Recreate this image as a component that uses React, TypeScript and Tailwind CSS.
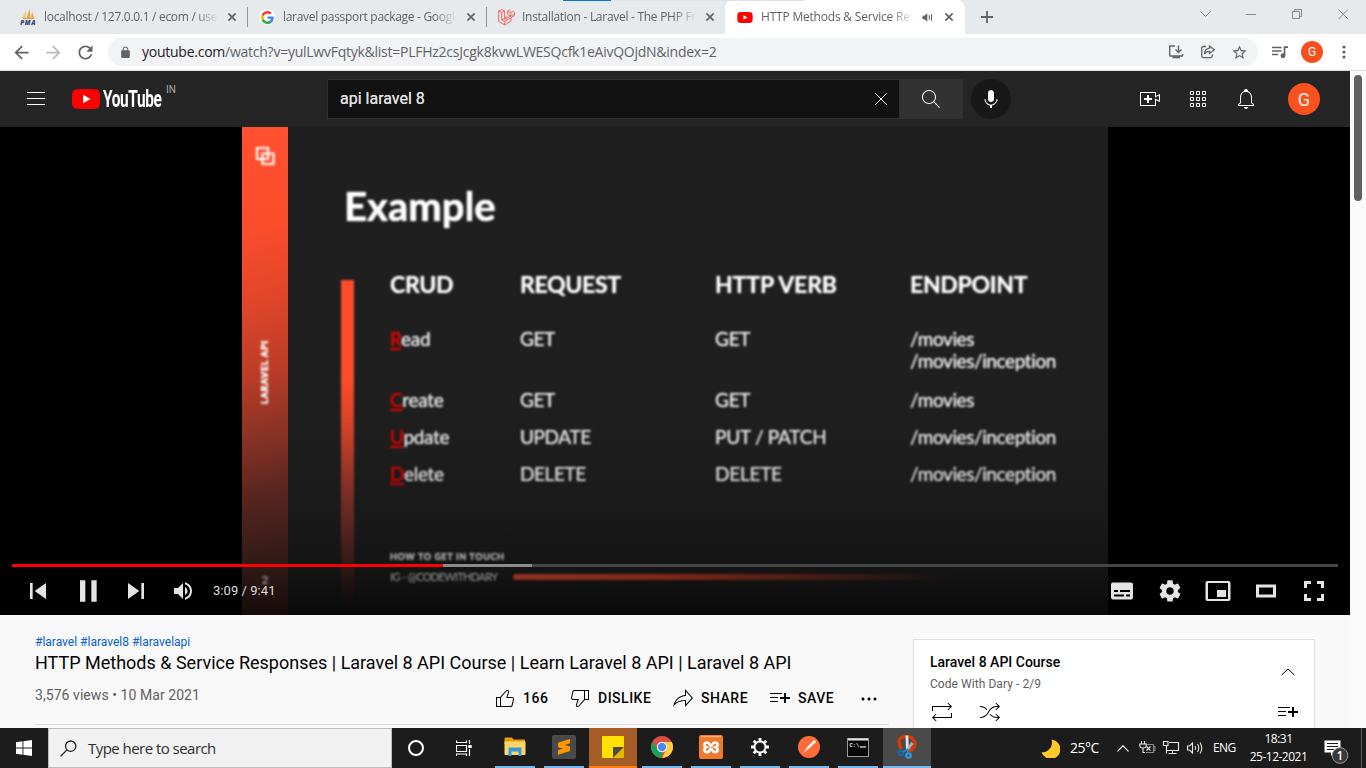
import type { ReactNode } from "react";

const ui = "font-['Open_Sans','Noto_Sans',sans-serif]";

function Icon({ d, size = 24, box = 24, className = "" }: { d: string; size?: number; box?: number; className?: string }) {
  return (
    <svg width={size} height={size} viewBox={`0 0 ${box} ${box}`} fill="currentColor" fillRule="evenodd" className={`block shrink-0 ${className}`}>
      <path d={d} />
    </svg>
  );
}

const P = {
  menu: "M21,6H3V5h18V6z M21,12H3v-1h18V12z M21,18H3v-1h18V18z",
  search:
    "M20.87,20.17l-5.59-5.59C16.35,13.35,17,11.75,17,10c0-3.87-3.13-7-7-7s-7,3.13-7,7s3.13,7,7,7c1.75,0,3.35-0.65,4.58-1.71l5.59,5.59L20.87,20.17z M10,16c-3.31,0-6-2.69-6-6s2.69-6,6-6s6,2.69,6,6S13.31,16,10,16z",
  mic: "M12 3C10.34 3 9 4.37 9 6.07V11.93C9 13.63 10.34 15 12 15C13.66 15 15 13.63 15 11.93V6.07C15 4.37 13.66 3 12 3ZM18.5 12H17.5C17.5 15.03 15.03 17.5 12 17.5C8.97 17.5 6.5 15.03 6.5 12H5.5C5.5 15.24 7.89 17.93 11 18.41V21H13V18.41C16.11 17.93 18.5 15.24 18.5 12Z",
  create: "M14,13h-3v3H9v-3H6v-2h3V8h2v3h3V13z M17,6H3v12h14v-6.39l4,1.83V8.56l-4,1.83V6z M18,5v3.83L22,7v8l-4-1.83V19H2V5H18z",
  bell: "M10,20h4c0,1.1-0.9,2-2,2S10,21.1,10,20z M20,17.35V19H4v-1.65l2-1.88v-5.15c0-2.92,1.56-5.22,4-5.98V3.96c0-1.42,1.49-2.5,2.99-1.76C13.64,2.52,14,3.23,14,3.96l0,0.39c2.44,0.75,4,3.06,4,5.98v5.15L20,17.35z M19,17.77l-2-1.88v-5.47c0-2.47-1.19-4.36-3.13-5.1c-1.26-0.53-2.64-0.5-3.84,0.03C8.15,6.11,7,7.99,7,10.42v5.47l-2,1.88V18h14V17.77z",
  like: "M18.77,11h-4.23l1.52-4.94C16.38,5.03,15.54,4,14.38,4c-0.58,0-1.14,0.24-1.52,0.65L7,11H3v10h4h1h9.43c1.06,0,1.98-0.67,2.19-1.61l1.34-6C21.23,12.15,20.18,11,18.77,11z M7,20H4v-8h3V20z M19.98,13.17l-1.34,6C18.54,19.65,18.03,20,17.43,20H8v-8.61l5.6-6.06C13.79,5.12,14.08,5,14.38,5c0.26,0,0.5,0.11,0.63,0.3c0.07,0.1,0.15,0.26,0.09,0.47l-1.52,4.94L13.18,12h1.35h4.23c0.41,0,0.8,0.17,1.03,0.46C19.92,12.61,20.05,12.86,19.98,13.17z",
  dislike:
    "M17,4h-1H6.57C5.5,4,4.59,4.67,4.38,5.61l-1.34,6C2.77,12.85,3.82,14,5.23,14h4.23l-1.52,4.94C7.62,19.97,8.46,21,9.62,21c0.58,0,1.14-0.24,1.52-0.65L17,14h4V4H17z M10.4,19.67C10.21,19.88,9.92,20,9.62,20c-0.26,0-0.5-0.11-0.63-0.3c-0.07-0.1-0.15-0.26-0.09-0.47l1.52-4.94l0.4-1.29H9.46H5.23c-0.41,0-0.8-0.17-1.03-0.46c-0.12-0.15-0.25-0.4-0.18-0.72l1.34-6C5.46,5.35,5.97,5,6.57,5H16v8.61L10.4,19.67z M20,13h-3V5h3V13z",
  share: "M15,5.63L20.66,12L15,18.37V15v-1h-1c-3.96,0-7.14,1-9.75,3.09c1.84-4.07,5.11-6.4,9.89-7.1L15,9.86V9V5.63z M14,3v6C6.22,10.13,3.11,15.33,2,21c2.78-3.97,6.44-6,12-6v6l8-9L14,3z",
  save: "M22,13h-4v4h-2v-4h-4v-2h4V7h2v4h4V13z M14,7H2v1h12V7z M2,12h8v-1H2V12z M2,16h8v-1H2V16z",
  dots: "M7.5,12c0,0.83-0.67,1.5-1.5,1.5S4.5,12.83,4.5,12s0.67-1.5,1.5-1.5S7.5,11.17,7.5,12z M12,10.5c-0.83,0-1.5,0.67-1.5,1.5s0.67,1.5,1.5,1.5s1.5-0.67,1.5-1.5S12.83,10.5,12,10.5z M18,10.5c-0.83,0-1.5,0.67-1.5,1.5s0.67,1.5,1.5,1.5s1.5-0.67,1.5-1.5S18.83,10.5,18,10.5z",
  loop: "M21,13h1v5L3.93,18.03l2.62,2.62l-0.71,0.71L1.99,17.5l3.85-3.85l0.71,0.71l-2.67,2.67L21,17V13z M3,7l17.12-0.03l-2.67,2.67l0.71,0.71l3.85-3.85l-3.85-3.85l-0.71,0.71l2.62,2.62L2,6v5h1V7z",
  shuffle:
    "M18.15,13.65L22,17.5l-3.85,3.85l-0.71-0.71L20.09,18H19c-2.84,0-5.53-1.23-7.39-3.38l0.76-0.65C14.03,15.89,16.45,17,19,17h1.09l-2.65-2.65L18.15,13.65z M19,7h1.09l-2.65,2.65l0.71,0.71L22,6.5l-3.85-3.85l-0.71,0.71L20.09,6H19c-3.58,0-6.86,1.95-8.57,5.09l-0.73,1.34C8.16,15.25,5.21,17,2,17v1c3.58,0,6.86-1.95,8.57-5.09l0.73-1.34C12.84,8.75,15.79,7,19,7z M8.59,9.98l0.75-0.66C7.49,7.21,4.81,6,2,6v1C4.52,7,6.92,8.09,8.59,9.98z",
  gear: "m 23.94,18.78 c .03,-0.25 .05,-0.51 .05,-0.78 0,-0.27 -0.02,-0.52 -0.05,-0.78 l 1.68,-1.32 c .15,-0.12 .19,-0.33 .09,-0.51 l -1.6,-2.76 c -0.09,-0.17 -0.31,-0.24 -0.48,-0.17 l -1.99,.8 c -0.41,-0.32 -0.86,-0.58 -1.35,-0.78 l -0.30,-2.12 c -0.02,-0.19 -0.19,-0.33 -0.39,-0.33 l -3.2,0 c -0.2,0 -0.36,.14 -0.39,.33 l -0.30,2.12 c -0.48,.2 -0.93,.47 -1.35,.78 l -1.99,-0.8 c -0.18,-0.07 -0.39,0 -0.48,.17 l -1.6,2.76 c -0.10,.17 -0.05,.39 .09,.51 l 1.68,1.32 c -0.03,.25 -0.05,.52 -0.05,.78 0,.26 .02,.52 .05,.78 l -1.68,1.32 c -0.15,.12 -0.19,.33 -0.09,.51 l 1.6,2.76 c .09,.17 .31,.24 .48,.17 l 1.99,-0.8 c .41,.32 .86,.58 1.35,.78 l .30,2.12 c .02,.19 .19,.33 .39,.33 l 3.2,0 c .2,0 .36,-0.14 .39,-0.33 l .30,-2.12 c .48,-0.2 .93,-0.47 1.35,-0.78 l 1.99,.8 c .18,.07 .39,0 .48,-0.17 l 1.6,-2.76 c .09,-0.17 .05,-0.39 -0.09,-0.51 l -1.68,-1.32 0,0 z m -5.94,2.01 c -1.54,0 -2.8,-1.25 -2.8,-2.8 0,-1.54 1.25,-2.8 2.8,-2.8 1.54,0 2.8,1.25 2.8,2.8 0,1.54 -1.25,2.8 -2.8,2.8 l 0,0 z",
  prev: "M12,12h2v12h-2z M15.5,18l8.5,6V12z",
  pause: "M12,26h4V10h-4z M20.5,26h4V10h-4z",
  next: "M12,24l8.5-6L12,12z M22,12v12h2V12z",
  volume:
    "M8,21L12,21L17,26L17,10L12,15L8,15Z M19,14L19,22C20.48,21.32 21.5,19.77 21.5,18C21.5,16.26 20.48,14.74 19,14Z M19,11.29C21.89,12.15 24,14.83 24,18C24,21.17 21.89,23.85 19,24.71L19,26.77C23.01,25.86 26,22.28 26,18C26,13.72 23.01,10.14 19,9.23Z",
  back: "M20 11H7.83l5.59-5.59L12 4l-8 8 8 8 1.41-1.41L7.83 13H20v-2z",
  forward: "M4 11h12.17l-5.59-5.59L12 4l8 8-8 8-1.41-1.41L16.17 13H4z",
  reload:
    "M17.65 6.35C16.2 4.9 14.21 4 12 4c-4.42 0-7.99 3.58-7.99 8s3.57 8 7.99 8c3.73 0 6.84-2.55 7.73-6h-2.08c-.82 2.33-3.04 4-5.65 4-3.31 0-6-2.69-6-6s2.69-6 6-6c1.66 0 3.14.69 4.22 1.78L13 11h7V4l-2.35 2.35z",
  lock: "M18 8h-1V6c0-2.76-2.24-5-5-5S7 3.24 7 6v2H6c-1.1 0-2 .9-2 2v10c0 1.1.9 2 2 2h12c1.1 0 2-.9 2-2V10c0-1.1-.9-2-2-2zM8.9 6c0-1.71 1.39-3.1 3.1-3.1s3.1 1.39 3.1 3.1v2H8.9V6z",
  star: "M22 9.24l-7.19-.62L12 2 9.19 8.63 2 9.24l5.46 4.73L5.82 21 12 17.27 18.18 21l-1.63-7.03L22 9.24zM12 15.4l-3.76 2.27 1-4.28-3.32-2.88 4.38-.38L12 6.1l1.71 4.04 4.38.38-3.32 2.88 1 4.28L12 15.4z",
};

function CloseX({ className = "" }: { className?: string }) {
  return (
    <svg width="8" height="8" viewBox="0 0 8 8" stroke="#5f6368" strokeWidth="1.7" className={`block shrink-0 ${className}`}>
      <path d="M0.4 0.4L7.6 7.6M7.6 0.4L0.4 7.6" />
    </svg>
  );
}

function PlayBadge({ className }: { className: string }) {
  return (
    <svg viewBox="0 0 28 20" className={`block shrink-0 ${className}`}>
      <path d="M27.4 3.1C27.1 1.9 26.1 0.9 24.9 0.6 22.7 0 14 0 14 0S5.3 0 3.1 0.6C1.9 0.9 0.9 1.9 0.6 3.1 0 5.3 0 10 0 10s0 4.7 0.6 6.9c0.3 1.2 1.3 2.2 2.5 2.5C5.3 20 14 20 14 20s8.7 0 10.9-0.6c1.2-0.3 2.2-1.3 2.5-2.5C28 14.7 28 10 28 10s0-4.7-0.6-6.9z" fill="#f00" />
      <path d="M11.2 14.3L18.5 10 11.2 5.7z" fill="#fff" />
    </svg>
  );
}

function TabTitle({ children, className }: { children: ReactNode; className: string }) {
  return (
    <span className={`block shrink-0 overflow-hidden whitespace-nowrap text-[12px] leading-[18px] text-[#5f6368] [mask-image:linear-gradient(to_right,black_calc(100%-24px),transparent)] ${className}`}>
      {children}
    </span>
  );
}

function TabStrip() {
  return (
    <div className={`relative flex h-[34px] bg-[#e6eaed] ${ui}`}>
      <div className="absolute top-0 left-[563px] z-10 h-px w-[48px] bg-[#0a74d8]" />
      <div className="absolute top-0 left-[611px] z-10 h-px w-[193px] bg-[#e2e2e2]" />
      <div className="flex w-[247px] shrink-0 items-center pl-5">
        <svg width="16" height="16" viewBox="0 0 16 16" className="shrink-0 overflow-visible">
          <path d="M6.5 0.5L2 9h4z" fill="#f9c47a" />
          <path d="M9.5 0L6.5 9.5h4z" fill="#f89c2c" />
          <path d="M12 2.5L11 9.5h3.5z" fill="#f8a73c" />
          <path d="M3 9.5h11" stroke="#c8a66a" />
          <text x="0.2" y="15.6" fontSize="6.4" fontWeight="900" fontStyle="italic" fill="#3b3f78" fontFamily="Open Sans" textLength="15.3">PMA</text>
        </svg>
        <TabTitle className="ml-2 w-[175px] tracking-[-0.3px]">localhost / 127.0.0.1 / ecom / user</TabTitle>
        <CloseX className="ml-[9px]" />
      </div>
      <div className="mt-[7px] h-5 w-px shrink-0 bg-[#909498]" />
      <div className="flex w-[238px] shrink-0 items-center pl-[11px]">
        <span className="flex size-4 items-center justify-center rounded-full bg-white">
          <svg width="13" height="13" viewBox="0 0 48 48">
            <path fill="#FFC107" d="M10.5 28.6A14 14 0 0 1 10.5 19.4L2.6 13.2a24 24 0 0 0 0 21.600z" />
            <path fill="#EA4335" d="M24 9.5c3.5 0 6.6 1.2 9 3.6l6.9-6.9C35.9 2.4 30.5 0 24 0 14.6 0 6.500 5.400 2.600 13.200l8 6.200C12.400 13.700 17.700 9.500 24 9.500z" />
            <path fill="#34A853" d="M24 48c6.500 0 11.900-2.100 15.900-5.800l-7.700-6c-2.200 1.500-4.900 2.300-8.200 2.300-6.300 0-11.600-4.200-13.500-9.900l-8 6.200C6.500 42.600 14.600 48 24 48z" />
            <path fill="#4285F4" d="M47 24.600c0-1.600-0.200-3.100-0.400-4.600H24v9h12.900c-0.600 3-2.200 5.500-4.700 7.200l7.700 6C44.400 38 47 32 47 24.600z" />
          </svg>
        </span>
        <TabTitle className="ml-2 w-[174px] tracking-[-0.3px]">laravel passport package - Google Search</TabTitle>
        <CloseX className="ml-[10px]" />
      </div>
      <div className="mt-[7px] h-5 w-px shrink-0 bg-[#909498]" />
      <div className="flex w-[238px] shrink-0 items-center rounded-br-lg pl-[11px]">
        <svg width="17" height="17" viewBox="0 0 17 17" fill="none" stroke="#f2675f" strokeWidth="1" strokeLinejoin="round" className="shrink-0">
          <path d="M0.700 2L3.700 0.600 6.700 2V10.500L12.500 7.200V3.800L15.500 2.300 16.500 3.300V6.700L13 8.700V12L6.900 16 0.700 12.500zM3.700 3.500V10.800L6.700 12.500 13 8.700M0.700 2L3.700 3.500 6.700 2M6.700 12.500V16M12.500 3.800L9.500 2.300 12.500 0.800M9.500 2.300V5.500L12.500 7.200 16 5.500M3.700 10.800L9.500 7.500" />
        </svg>
        <TabTitle className="ml-[7px] w-[175px] tracking-[-0.280px]">Installation - Laravel - The PHP Framework</TabTitle>
        <CloseX className="ml-[9px]" />
      </div>
      <div className="flex w-[240px] shrink-0 items-center rounded-t-lg bg-white pl-3">
        <PlayBadge className="h-[11px] w-4" />
        <TabTitle className="ml-2 w-[153px] tracking-[-0.2px]">HTTP Methods &amp; Service Responses</TabTitle>
        <svg width="11" height="11" viewBox="0 0 11 11" className="ml-[8px] shrink-0">
          <path d="M0.500 3.700H2.500L5.300 1.200V9.800L2.500 7.300H0.500z" fill="#5f6368" />
          <path d="M7.300 3.300V7.700M9.500 2.200V8.800" stroke="#5f6368" strokeWidth="1.100" />
        </svg>
        <CloseX className="ml-[11.500px]" />
      </div>
      <svg width="12" height="12" viewBox="0 0 12 12" stroke="#5f6368" strokeWidth="1.800" className="mt-[11px] ml-4 shrink-0">
        <path d="M6 0V12M0 6H12" />
      </svg>
      <svg width="150" height="14" viewBox="0 0 150 14" fill="none" stroke="#84898d" className="mt-2 ml-[207px] shrink-0">
        <path d="M0.500 3.500L5.500 8.500 10.500 3.500M46 6.500H56M92.500 3.500H99.500V10.500H92.500zM94.500 3.500V1.500H101.500V8.500H99.500M138.500 1.500L148 11M148 1.500L138.500 11" />
      </svg>
    </div>
  );
}

function Toolbar() {
  return (
    <div className={`flex h-[37px] items-center border-b border-[#d9dde0] bg-white text-[#5f6368] ${ui}`}>
      <Icon d={P.back} size={21} className="ml-[11px]" />
      <Icon d={P.forward} size={21} className="ml-[11px] text-[#b8babd]" />
      <Icon d={P.reload} size={21} className="ml-[11px]" />
      <div className="ml-[12px] flex h-7 w-[1150px] shrink-0 items-center rounded-full bg-[#f1f3f4]">
        <Icon d={P.lock} size={13} className="ml-[11px]" />
        <span className="ml-[10px] w-[1020px] text-[14px] leading-5 tracking-[-0.250px] whitespace-nowrap">
          <span className="text-[#202124]">youtube.com</span>/watch?v=yulLwvFqtyk&amp;list=PLFHz2csJcgk8kvwLWESQcfk1eAivQOjdN&amp;index=2
        </span>
        <svg width="16" height="16" viewBox="0 0 16 16" fill="none" stroke="#5f6368" strokeWidth="1.400" className="ml-[6px] shrink-0">
          <path d="M7 2H2.200Q1.700 2 1.700 2.500V11.500Q1.700 12 2.200 12H14Q14.600 12 14.600 11.500V10M10.500 1.500V8M7.500 5.500L10.500 8.500 13.500 5.500" />
          <path d="M4.500 13.300H12" strokeWidth="2" />
        </svg>
        <svg width="16" height="16" viewBox="0 0 16 16" fill="none" stroke="#5f6368" strokeWidth="1.300" className="ml-4 shrink-0">
          <path d="M6 2.500H3.500Q1.700 2.500 1.700 4.300V11.800Q1.700 13.600 3.500 13.600H10.500Q12.300 13.600 12.300 11.800V10.500" />
          <path d="M9.500 2L14.300 5.700 9.500 9.500V7.300Q6 7.300 4.300 10 4.800 4.800 9.500 4.200z" />
        </svg>
        <Icon d={P.star} size={17} className="ml-[15px]" />
      </div>
      <svg width="17" height="14" viewBox="0 0 17 14" stroke="#5f6368" strokeWidth="1.700" className="ml-[14px] shrink-0">
        <path d="M0 2.500H9.500M0 6H9.500M0 9.500H6M12.500 10.500V2.200H16" fill="none" />
        <circle cx="11" cy="10.700" r="1.600" fill="#5f6368" />
      </svg>
      <span className="ml-[12px] flex size-[22px] shrink-0 items-center justify-center rounded-full bg-[#f9511d] font-['Roboto',sans-serif] text-[12px] text-white">G</span>
      <svg width="4" height="14" viewBox="0 0 4 14" fill="#5f6368" className="ml-[19px] shrink-0">
        <circle cx="2" cy="2" r="1.600" />
        <circle cx="2" cy="7" r="1.600" />
        <circle cx="2" cy="12" r="1.600" />
      </svg>
    </div>
  );
}

function Masthead() {
  return (
    <header className="flex h-14 shrink-0 items-center bg-[#252525] text-white">
      <Icon d={P.menu} className="ml-6" />
      <PlayBadge className="ml-6 h-5 w-7" />
      <span className="ml-[3px] w-[60px] origin-left scale-x-[0.630] font-['Roboto',sans-serif] text-[24.500px] leading-[24px] font-bold tracking-[-0.600px]">YouTube</span>
      <span className="-mt-[18px] ml-[3px] w-[20px] font-['Roboto',sans-serif] text-[10px] leading-3 text-[#aaa]">IN</span>
      <div className="ml-[141px] flex h-10 w-[573px] shrink-0 items-center border border-[#303030] bg-[#121212]">
        <span className="ml-3 grow font-['Roboto',sans-serif] text-[16px] text-[#e2e2e2] [text-shadow:0_0_0.500px_#e2e2e2]">api laravel 8</span>
        <svg width="14" height="14" viewBox="0 0 14 14" stroke="#fff" className="mr-[11px]">
          <path d="M1 1L13 13M13 1L1 13" />
        </svg>
      </div>
      <div className="flex h-10 w-[63px] shrink-0 items-center justify-center border border-l-0 border-[#303030] bg-[#323232]">
        <Icon d={P.search} />
      </div>
      <div className="ml-2 flex size-10 shrink-0 items-center justify-center rounded-full bg-[#181818]">
        <Icon d={P.mic} />
      </div>
      <Icon d={P.create} className="ml-[127px]" />
      <svg width="24" height="24" viewBox="0 0 24 24" fill="none" stroke="#fff" className="ml-6 shrink-0">
        <path d="M4.500 4.500h3v3h-3zM10.500 4.500h3v3h-3zM16.500 4.500h3v3h-3zM4.500 10.500h3v3h-3zM10.500 10.500h3v3h-3zM16.500 10.500h3v3h-3zM4.500 16.500h3v3h-3zM10.500 16.500h3v3h-3zM16.500 16.500h3v3h-3z" />
      </svg>
      <Icon d={P.bell} className="ml-6" />
      <span className="ml-[30px] flex size-8 shrink-0 items-center justify-center rounded-full bg-[#f9511d] font-['Roboto',sans-serif] text-[18px] text-[#f4ddd4] [text-shadow:0_0_0.500px_#f4ddd4]">G</span>
    </header>
  );
}

const rows = [
  { h: "h-[61px]", crud: "Read", req: "GET", verb: "GET", end: ["/movies", "/movies/inception"] },
  { h: "h-[37px]", crud: "Create", req: "GET", verb: "GET", end: ["/movies"] },
  { h: "h-[37px]", crud: "Update", req: "UPDATE", verb: "PUT / PATCH", end: ["/movies/inception"] },
  { h: "h-[37px]", crud: "Delete", req: "DELETE", verb: "DELETE", end: ["/movies/inception"] },
];

function Slide() {
  return (
    <div className="flex h-[488px] w-[866px] overflow-hidden bg-[#1f1f1f] font-['Lato',sans-serif] text-[#dedede] [font-variant-ligatures:none]">
      <div className="w-[46px] shrink-0 bg-[linear-gradient(165deg,#ff5130_0%,#fc4d2b_20%,#df4629_36%,#bb3c27_50%,#8f3427_63%,#632b24_76%,#4a2622_90%,#4a2622_100%)]">
        <div className="flex h-full flex-col items-center text-[#ffe3dc] blur-[0.800px]">
          <svg width="20" height="20" viewBox="0 0 20 20" fill="none" stroke="#fff" strokeWidth="2.200" className="mt-[19px]">
            <path d="M2 2H13V13H2zM7.500 7.500H18.500V18H7.500z" />
          </svg>
          <span className="mt-[172px] h-[66px] rotate-180 text-[9px] leading-[10px] font-black tracking-[0.800px] text-white whitespace-nowrap [text-shadow:0_0_1px_#fff,0_0_1px_#fff] [writing-mode:vertical-rl]">LARAVEL API</span>
          <span className="mt-[168px] text-[12px] leading-4 font-bold text-white">2</span>
        </div>
      </div>
      <div className="mt-[153px] ml-[53px] h-[328px] w-[13px] shrink-0 bg-[linear-gradient(180deg,#ff4d2c_0%,#ff4d2c_28%,#e0472a_43%,#a93b2a_58%,#74302a_74%,#522824_86%,transparent_100%)] blur-[0.800px]" />
      <div className="blur-[0.800px]">
        <div className="mt-[55px] -ml-[10px] text-[40px] leading-[48px] font-bold text-white [text-shadow:0_0_1px_#fff,0_0_1px_#fff]">Example</div>
        <div className="mt-[42px] ml-9 grid grid-cols-[130px_195px_195px_200px] text-[23px] leading-6 font-bold tracking-[-0.300px] text-white [text-shadow:0_0_1px_#fff]">
          <span>CRUD</span>
          <span>REQUEST</span>
          <span className="tracking-[-0.100px]">HTTP VERB</span>
          <span>ENDPOINT</span>
        </div>
        <div className="mt-[32px] ml-9 text-[19px] leading-[22px] tracking-[-0.400px] text-[#f0f0f0] [text-shadow:0_0_1px_currentColor]">
          {rows.map((r) => (
            <div key={r.crud} className={`grid grid-cols-[130px_195px_195px_200px] ${r.h}`}>
              <span className="tracking-[-0.300px]">
                <span className="text-[#ee0000] underline decoration-2 underline-offset-2">{r.crud[0]}</span>
                {r.crud.slice(1)}
              </span>
              <span>{r.req}</span>
              <span className="tracking-[-0.250px]">{r.verb}</span>
              <span>
                {r.end.map((e) => (
                  <span key={e} className="block">{e}</span>
                ))}
              </span>
            </div>
          ))}
        </div>
        <div className="mt-[51px] ml-9 text-[9px] leading-3 font-black tracking-[0.620px] text-white [text-shadow:0_0_1px_#ccc]">HOW TO GET IN TOUCH</div>
        <div className="mt-[7px] ml-9 flex items-center text-[11px] leading-[14px] tracking-[-0.650px] text-[#fff]">
          <span className="w-[123px]">IG - @CODEWITHDARY</span>
          <span className="h-[6px] w-[440px] rounded-full bg-[linear-gradient(90deg,#f8553a_0%,#d84526_35%,transparent_100%)]" />
        </div>
      </div>
    </div>
  );
}

function Player() {
  return (
    <section className="relative flex h-[488px] shrink-0 justify-center bg-black">
      <Slide />
      <div className="absolute inset-x-0 bottom-0 flex h-[240px] flex-col justify-end bg-[linear-gradient(to_bottom,transparent_0%,rgba(0,0,0,0.060)_30%,rgba(0,0,0,0.200)_60%,rgba(0,0,0,0.380)_82%,rgba(0,0,0,0.700)_100%)]">
        <div className="mx-3 flex h-[3px] bg-[#444545]">
          <div className="w-[431px] bg-[#f00]" />
          <div className="w-[89px] bg-[#8b8b8b]" />
        </div>
        <div className="flex h-12 items-center text-[#e4e4e4]">
          <Icon d={P.prev} box={36} size={48} className="ml-[14px]" />
          <Icon d={P.pause} box={36} size={48} className="ml-[2px]" />
          <Icon d={P.next} box={36} size={48} />
          <Icon d={P.volume} box={36} size={36} className="ml-[6px]" />
          <span className="ml-[11px] grow font-['Roboto',sans-serif] text-[13px] tracking-[0.050px] text-[#ddd]">3:09 / 9:41</span>
          <svg width="214" height="24" viewBox="0 0 214 24" fill="#e4e4e4" fillRule="evenodd" className="mr-[25px] shrink-0">
            <path d="M2 3.500H20Q22 3.500 22 5.500V18.500Q22 20.500 20 20.500H2Q0 20.500 0 18.500V5.500Q0 3.500 2 3.500zM3 11H7V13H3zM9 11H19V13H9zM3 15.500H13V17.500H3zM15 15.500H19V17.500H15z" />
            <g transform="translate(35 -12) scale(1.333)">
              <path d={P.gear} />
            </g>
            <path d="M96.500 2H117.500Q119.500 2 119.500 4V20Q119.500 22 117.500 22H96.500Q94.500 22 94.500 20V4Q94.500 2 96.500 2zM97 4V20H117V4zM106 11H115V18H106z" />
            <path d="M145 5.500H165V18.500H145zM148 8.500V15.500H162V8.500z" />
            <path d="M193 2H200V5H196V9H193zM206 2H213V9H210V5H206zM193 15H196V19H200V22H193zM210 15H213V22H206V19H210z" />
          </svg>
        </div>
      </div>
    </section>
  );
}

function Action({ d, label, className }: { d: string; label: string; className: string }) {
  return (
    <span className={`flex items-center gap-[6px] ${className}`}>
      <Icon d={d} />
      <span className="whitespace-nowrap">{label}</span>
    </span>
  );
}

function Details() {
  return (
    <section className="flex h-[113px] shrink-0 overflow-hidden bg-[#f9f9f9] font-['Roboto',sans-serif] text-[#030303]">
      <div className="ml-[35px] w-[854px] shrink-0 pt-[18px]">
        <div className="text-[12px] leading-[18px] text-[#065fd4]">#laravel #laravel8 #laravelapi</div>
        <h1 className="text-[18px] leading-6 whitespace-nowrap">HTTP Methods &amp; Service Responses | Laravel 8 API Course | Learn Laravel 8 API | Laravel 8 API</h1>
        <div className="flex h-[50px] border-b border-[#dedede]">
          <span className="mt-[10px] w-[458px] text-[14px] leading-[20px] tracking-[0.060px] text-[#606060]">3,576 views • 10 Mar 2021</span>
          <div className="mt-[11px] flex h-6 text-[14px] font-medium tracking-[0.500px]">
            <Action d={P.like} label="166" className="w-[75px]" />
            <Action d={P.dislike} label="DISLIKE" className="w-[103px]" />
            <Action d={P.share} label="SHARE" className="w-[97px]" />
            <Action d={P.save} label="SAVE" className="w-[89px]" />
            <Icon d={P.dots} className="mt-px" />
          </div>
        </div>
      </div>
      <aside className="mt-6 ml-6 h-[89px] w-[402px] shrink-0 border border-b-0 border-[#dfdfdf] bg-white pl-4">
        <div className="flex items-center">
          <div className="grow pt-[12px]">
            <div className="text-[14px] leading-5 font-medium">Laravel 8 API Course</div>
            <div className="mt-px text-[12px] leading-[22px] tracking-[0.060px] text-[#606060]">Code With Dary - 2/9</div>
          </div>
          <svg width="14" height="8" viewBox="0 0 14 8" fill="none" stroke="#030303" className="mt-2 mr-[19px]">
            <path d="M0.700 7L7 0.900 13.300 7" />
          </svg>
        </div>
        <div className="mt-[5px] flex">
          <Icon d={P.loop} />
          <Icon d={P.shuffle} className="ml-6" />
          <Icon d={P.save} className="mr-[14px] ml-auto" />
        </div>
      </aside>
    </section>
  );
}

function TaskApp({ children, cell = "", line = "bg-[#76b9ed]" }: { children: ReactNode; cell?: string; line?: string }) {
  return (
    <div className={`flex h-10 w-12 shrink-0 flex-col items-center ${cell}`}>
      <div className="flex h-[38px] items-center justify-center">{children}</div>
      <div className={`h-[2px] w-full ${line}`} />
    </div>
  );
}

function Taskbar() {
  return (
    <footer className={`flex h-10 shrink-0 items-center bg-[#1c1c1c] text-white ${ui}`}>
      <div className="flex h-full w-12 shrink-0 items-center justify-center">
        <svg width="16" height="16" viewBox="0 0 16 16" fill="#fff">
          <path d="M0 2.200L6.500 1.300V7.500H0zM7.400 1.150L16 0V7.500H7.400zM0 8.400H6.500V14.700L0 13.800zM7.400 8.400H16V16L7.400 14.800z" />
        </svg>
      </div>
      <div className="flex h-full w-[344px] shrink-0 items-center border border-[#bdbdbd] bg-[#f1f1f1] text-[#2f2f2f]">
        <svg width="17" height="17" viewBox="0 0 17 17" fill="none" stroke="#222" strokeWidth="1.300" className="ml-[11px] shrink-0">
          <circle cx="10.700" cy="6.200" r="5.200" />
          <path d="M7 9.900L0.600 16.300" />
        </svg>
        <span className="ml-[11px] text-[15px] leading-5 tracking-[-0.540px]">Type here to search</span>
      </div>
      <div className="flex h-full w-12 shrink-0 items-center justify-center">
        <span className="size-4 rounded-full border-2 border-white" />
      </div>
      <div className="flex h-full w-[51px] shrink-0 items-center pl-4">
        <svg width="16" height="16" viewBox="0 0 16 16" fill="none" stroke="#fff" strokeWidth="1.200">
          <path d="M0.500 5.500H10.500V11.500H0.500zM0.500 0.500V2.500H10.500V0.500M0.500 16V14H10.500V16M13.500 0V4M13.500 9V16" />
          <path d="M12.300 5H15.700V8H12.300z" fill="#fff" stroke="none" />
        </svg>
      </div>
      <div className="flex shrink-0 gap-px">
        <TaskApp line="bg-[#76b9ed] max-w-10">
          <svg width="22" height="20" viewBox="0 0 22 20">
            <path d="M0.500 1.500Q0.500 0.500 1.500 0.500H8L9.500 2.500H20Q21 2.500 21 3.500V7H0.500z" fill="#e59e0b" />
            <path d="M0.500 4.500H21.500V17Q21.500 18 20.500 18H1.500Q0.500 18 0.500 17z" fill="#ffd766" />
            <path d="M4.500 10.500H17.500V19H14.500V14.500H7.500V19H4.500z" fill="#3a96dd" />
          </svg>
        </TaskApp>
        <TaskApp line="bg-[#76b9ed] max-w-10">
          <svg width="24" height="24" viewBox="0 0 24 24">
            <rect width="24" height="24" rx="2" fill="#4a4a4a" />
            <path d="M18 4L6 7.800V12.200L11 13.600 6 15.300V19.800L18 16V11.500L13 10 18 8.300z" fill="#ff9800" />
          </svg>
        </TaskApp>
        <TaskApp cell="bg-[#a55c26]" line="bg-[#ff7c10]">
          <svg width="22" height="22" viewBox="0 0 22 22">
            <path d="M1 0H21Q22 0 22 1V11L11 22H1Q0 22 0 21V1Q0 0 1 0z" fill="#ffe000" />
            <path d="M11 11H22L11 22z" fill="#4c4a44" />
            <path d="M22 11V21Q22 22 21 22H11z" fill="#e6b800" />
          </svg>
        </TaskApp>
        <TaskApp line="bg-[#76b9ed] max-w-10">
          <svg width="22" height="22" viewBox="0 0 22 22">
            <circle cx="11" cy="11" r="11" fill="#dd4f43" />
            <path d="M1.500 5.500L6.700 13.500 11 16.100 11 22A11 11 0 0 1 1.500 5.500z" fill="#1aa15f" />
            <path d="M11 22L15.300 13.500 15.300 7.500 11 6H20.800A11 11 0 0 1 11 22z" fill="#ffce42" />
            <circle cx="11" cy="11" r="5.200" fill="#fff" />
            <circle cx="11" cy="11" r="4.200" fill="#4c8bf5" />
          </svg>
        </TaskApp>
        <TaskApp line="bg-[#76b9ed] max-w-10">
          <svg width="24" height="24" viewBox="0 0 24 24">
            <rect width="24" height="24" rx="2" fill="#f07a2a" />
            <path d="M2 1.500H22" stroke="#fbb483" strokeWidth="1.200" />
            <path d="M8 7.500C4.800 7.500 4.800 11.300 7.200 12.300 4.800 13.300 4.800 17.200 8 17.200 11 17.200 10.500 13.800 12 13.800S13 17.200 16 17.200C19.200 17.200 19.200 13.300 16.800 12.300 19.200 11.300 19.200 7.500 16 7.500 13 7.500 13.500 10.800 12 10.800S11 7.500 8 7.500z" fill="none" stroke="#fff" strokeWidth="2.700" />
          </svg>
        </TaskApp>
        <TaskApp line="bg-[#76b9ed] max-w-10">
          <svg width="18" height="18" viewBox="-9 -9 18 18" stroke="#fff" fill="none">
            <circle r="5.500" strokeWidth="1.900" />
            <path d="M0 -9V-6M0 9V6M-9 0H-6M9 0H6M-6.300 -6.300L-4.200 -4.200M6.300 -6.300L4.200 -4.200M-6.300 6.300L-4.200 4.200M6.300 6.300L4.200 4.200" strokeWidth="2.800" />
          </svg>
        </TaskApp>
        <TaskApp line="bg-[#76b9ed] max-w-10">
          <svg width="22" height="22" viewBox="0 0 22 22">
            <circle cx="11" cy="11" r="11" fill="#ff6c37" />
            <path d="M15 5.500L9 11 10.800 12.800 16.800 6.800zM9 11L7.800 13.500 5 17 10.800 12.800z" fill="#fff" />
            <circle cx="16.300" cy="5.800" r="1.500" fill="#fff" />
          </svg>
        </TaskApp>
        <TaskApp line="bg-[#76b9ed] max-w-10">
          <svg width="22" height="19" viewBox="0 0 22 19">
            <rect x="0.500" y="0.500" width="21" height="18" fill="#070707" stroke="#9a9a9a" />
            <path d="M1 0.500H21V2.500H1z" fill="#e1e6ea" />
            <path d="M13 9H19" stroke="#eee" strokeWidth="1.200" />
            <text x="2.500" y="8.800" fontSize="5.500" fontFamily="Liberation Mono" fontWeight="700" fill="#eee">C:\</text>
          </svg>
        </TaskApp>
        <TaskApp cell="bg-[#4a4a4a]">
          <svg width="22" height="24" viewBox="0 0 22 24">
            <path d="M5.500 14Q0.500 6 5.500 2.500Q12 0 16.500 3.500Q21.500 9 16.500 14Q14.500 16 12.500 15.500" fill="none" stroke="#d83b01" strokeWidth="3.200" />
            <path d="M9.500 0.500H12.300L12.800 14.500H10z" fill="#e4e7ea" />
            <path d="M15.500 6.500L11 13.500 12.500 15.500 17.500 9z" fill="#a9aeb3" />
            <circle cx="5" cy="18" r="2.300" fill="none" stroke="#0f6cbd" strokeWidth="2" />
            <circle cx="12.500" cy="20.500" r="2.300" fill="none" stroke="#2aa0ea" strokeWidth="2" />
            <path d="M7 17L11.500 14.500 12.300 18" fill="none" stroke="#2188d8" strokeWidth="1.800" />
          </svg>
        </TaskApp>
      </div>
      <svg width="19" height="19" viewBox="0 0 19 19" className="ml-[110px] shrink-0">
        <path d="M10.500 0.500A9.700 9.700 0 1 1 0.500 13.300 9.800 9.800 0 0 0 10.500 0.500z" fill="#ffca28" />
      </svg>
      <span className="ml-[10px] w-[33px] text-[14px] leading-5 tracking-[-0.500px] whitespace-nowrap">25°C</span>
      <svg width="12" height="7" viewBox="0 0 12 7" fill="none" stroke="#fff" strokeWidth="1.200" className="ml-[14px] shrink-0">
        <path d="M0.500 6.300L6 0.800 11.500 6.300" />
      </svg>
      <svg width="66" height="16" viewBox="0 0 66 16" fill="none" stroke="#e8e8e8" strokeWidth="1.100" className="ml-[10px] shrink-0">
        <path d="M2.500 1V3.500M5.500 1V3.500M0.800 4H7.200V6Q7 8 4 8T0.800 6zM4 8V12.500H6" />
        <path d="M8 4.500H14.500V12.500H7M14.500 6.500H16V10.500H14.500" stroke="#8a8a8a" />
        <path d="M7.500 6.500L11.500 10.500M11.500 6.500L7.500 10.500" />
        <path d="M30 2.500H39.500V10.500H27.500V7M24.500 1.500H29V5.500H24.500zM27.500 5.500V13.500M33.500 10.500V13.500M29.500 13.500H37.500" />
        <path d="M48.500 6H50.500L53.500 3V13L50.500 10H48.500zM56 6Q57.500 8 56 10M58.500 4Q61 8 58.500 12M61 2.500Q64.500 8 61 13.500" />
      </svg>
      <span className="ml-[8px] w-[24px] text-[12px] leading-5 tracking-[-0.600px]">ENG</span>
      <div className="ml-[10px] flex w-[63px] shrink-0 flex-col items-center text-[12px] leading-[18px] tracking-[-0.500px] whitespace-nowrap">
        <span>18:31</span>
        <span>25-12-2021</span>
      </div>
      <svg width="26" height="28" viewBox="0 0 26 28" className="mt-[6px] ml-[14px] shrink-0">
        <path d="M0.500 3.500H16.500V15.500H10L7 19V15.500H0.500z" fill="#fff" />
        <path d="M3 6.500H14M3 9.500H14M3 12.500H10" stroke="#1c1c1c" />
        <circle cx="16" cy="18.500" r="7.800" fill="#3a3a3a" stroke="#9a9a9a" />
        <text x="16" y="23" fontSize="12" fontWeight="600" fill="#fff" fontFamily="Open Sans" textAnchor="middle">1</text>
      </svg>
      <div className="ml-auto h-full w-[5px] shrink-0 border-l border-[#5c5c5c]" />
    </footer>
  );
}

export default function App() {
  return (
    <div className="flex h-[768px] w-[1366px] flex-col overflow-hidden bg-white">
      <TabStrip />
      <Toolbar />
      <div className="flex h-[657px] shrink-0">
        <main className="flex w-[1350px] shrink-0 flex-col">
          <Masthead />
          <Player />
          <Details />
        </main>
        <div className="w-4 bg-[#fafafa] pt-1 pl-1">
          <div className="h-[126px] w-2 rounded-full bg-[#606060]" />
        </div>
      </div>
      <Taskbar />
    </div>
  );
}
